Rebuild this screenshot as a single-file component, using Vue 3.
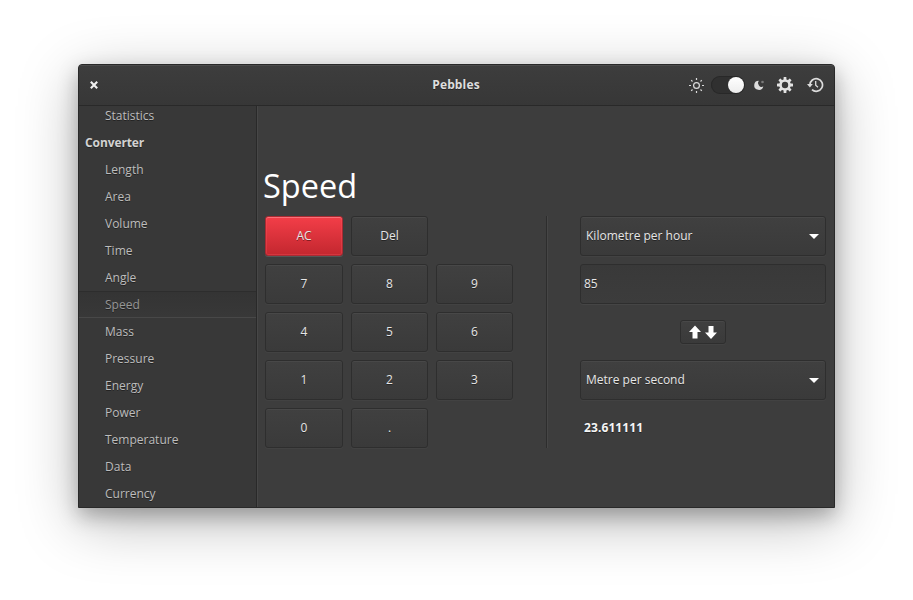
<script setup>
import { ref } from 'vue'

const units = ['Length', 'Area', 'Volume', 'Time', 'Angle', 'Speed', 'Mass', 'Pressure', 'Energy', 'Power', 'Temperature', 'Data', 'Currency']
const selected = ref('Speed')
const keys = ['7', '8', '9', '4', '5', '6', '1', '2', '3', '0', '.']
</script>

<template>
  <div class="desktop">
    <div class="window">
      <header class="headerbar">
        <div class="side">
          <svg class="close" viewBox="0 0 8 8" width="8" height="8"><path d="M.8 .8L7.200 7.200M7.200 .8L.8 7.200" stroke="#f0f0f0" stroke-width="2.100" /></svg>
        </div>
        <h1 class="title">Pebbles</h1>
        <div class="side tools">
          <svg class="sun" width="16" height="16" viewBox="0 0 16 16" fill="none" stroke="#dcdcdc">
            <circle cx="8.500" cy="8.500" r="2.900" stroke-width="1.200" />
            <path d="M8.500 1V3M8.500 14v2M1 8.500H3M14 8.500h2M3.200 3.200l1.300 1.300M12.500 12.500l1.300 1.300M13.800 3.200l-1.300 1.300M4.500 12.500l-1.300 1.300" stroke-width="1.200" />
          </svg>
          <div class="switch"><span class="knob"></span></div>
          <svg class="moon" width="12" height="12" viewBox="0 0 12 12" fill="#dcdcdc">
            <path d="M5.800 1.700A4.600 4.600 0 1 0 10.300 7.200A2.800 2.800 0 0 1 5.800 6.200A3.600 3.600 0 0 1 5.800 1.700Z" />
            <circle cx="9.500" cy="3" r="1.300" opacity=".4" />
          </svg>
          <svg class="gear" width="16" height="16" viewBox="0 0 16 16">
            <g fill="#e2e2e2">
              <rect v-for="a in [0, 45, 90, 135]" :key="a" x="6.600" y="0" width="2.800" height="16" rx=".5" :transform="`rotate(${a} 8 8)`" />
              <circle cx="8" cy="8" r="5.800" />
            </g>
            <circle cx="8" cy="8" r="3.200" fill="#3a3a3a" />
          </svg>
          <svg class="history" width="17" height="16" viewBox="0 0 17 16" fill="none" stroke="#dcdcdc">
            <path d="M2.900 8A6.300 6.300 0 1 1 5 12.700" stroke-width="1.700" />
            <path d="M0 7H5.800L2.900 10.500Z" fill="#dcdcdc" stroke="none" />
            <path d="M8.700 4V8.300L11 10.300" stroke-width="1.300" />
          </svg>
        </div>
      </header>
      <div class="body">
        <nav class="sidebar">
          <div class="item">Statistics</div>
          <div class="item category">Converter</div>
          <div v-for="u in units" :key="u" class="item" :class="{ selected: u === selected }" @click="selected = u">{{ u }}</div>
        </nav>
        <main class="content">
          <h2 class="heading">Speed</h2>
          <div class="panels">
            <div class="keypad">
              <button class="btn destructive">AC</button>
              <button class="btn">Del</button>
              <span></span>
              <button v-for="k in keys" :key="k" class="btn">{{ k }}</button>
            </div>
            <div class="separator"></div>
            <div class="conversion">
              <button class="btn combo">Kilometre per hour
                <svg width="10" height="5" viewBox="0 0 10 5"><path d="M0 0H10L5 5Z" fill="#fff" /></svg>
              </button>
              <div class="entry">85</div>
              <div class="swap-row">
                <button class="btn swap">
                  <svg width="28" height="14" viewBox="0 0 28 14" fill="#fff">
                    <path d="M6 .5L12 7H8.500V13.500H3.500V7H0Z" />
                    <path d="M22 14L16 7.500H19.500V1H24.500V7.500H28Z" />
                  </svg>
                </button>
              </div>
              <button class="btn combo">Metre per second
                <svg width="10" height="5" viewBox="0 0 10 5"><path d="M0 0H10L5 5Z" fill="#fff" /></svg>
              </button>
              <div class="result">23.611111</div>
            </div>
          </div>
        </main>
      </div>
    </div>
  </div>
</template>

<style>
body {
  background: #fff;
}
</style>

<style scoped>
* {
  box-sizing: border-box;
}
.desktop {
  height: 600px;
  padding: 64px 78px 92px;
  overflow: hidden;
  font: 12px/18px "Open Sans", "Noto Sans", sans-serif;
  color: #e6e6e6;
  text-shadow: 0 1px rgba(0, 0, 0, 0.4);
}
.window {
  display: flex;
  flex-direction: column;
  width: 757px;
  height: 444px;
  border: 1px solid #292929;
  border-radius: 4px 4px 0 0;
  background: #3d3d3d;
  overflow: hidden;
  box-shadow: 0 14px 60px rgba(0, 0, 0, 0.28), 0 8px 20px rgba(0, 0, 0, 0.26);
}
.headerbar {
  flex: none;
  display: flex;
  align-items: center;
  height: 41px;
  padding: 0 10px 0 11px;
  border-bottom: 1px solid #292929;
  background: linear-gradient(#3d3d3d, #373737);
  box-shadow: inset 0 1px #4b4b4b;
}
.side {
  flex: 1;
  display: flex;
  align-items: center;
}
.tools {
  justify-content: flex-end;
}
.title {
  margin: 0 2px 0 0;
  font-size: 12px;
  font-weight: 700;
  letter-spacing: 0.15px;
  color: #dedede;
}
.sun {
  margin-right: 7px;
}
.switch {
  display: flex;
  justify-content: flex-end;
  width: 34px;
  height: 18px;
  margin-right: 8px;
  padding: 1px;
  border-radius: 9px;
  background: #303030;
  box-shadow: inset 0 0 0 1px #282828;
}
.knob {
  width: 16px;
  height: 16px;
  border-radius: 50%;
  background: linear-gradient(#fff, #ededed);
}
.moon {
  margin-right: 12px;
}
.gear {
  margin-right: 14px;
}
.body {
  flex: 1;
  min-height: 0;
  display: flex;
}
.sidebar {
  flex: none;
  display: flex;
  flex-direction: column;
  justify-content: flex-end;
  width: 178px;
  overflow: hidden;
  border-right: 1px solid #292929;
  background: #383838;
  color: #bdbdbd;
}
.item {
  flex: none;
  height: 27px;
  padding-left: 26px;
  line-height: 27px;
}
.category {
  padding-left: 6px;
  font-weight: 700;
  letter-spacing: -0.1px;
  color: #d2d2d2;
}
.selected {
  line-height: 25px;
  border-top: 1px solid #2d2d2d;
  border-bottom: 1px solid #484848;
  background: linear-gradient(#343434, #383838);
  color: #969696;
}
.content {
  flex: 1;
  padding: 57px 8px 0 7px;
  border-left: 1px solid #474747;
}
.heading {
  height: 53px;
  margin: 0 0 0 -2px;
  font-size: 32.5px;
  line-height: 46px;
  font-weight: 400;
  color: #fff;
  text-shadow: none;
}
.panels {
  display: flex;
}
.keypad {
  display: grid;
  grid-template-columns: 78px 77px 77px;
  grid-auto-rows: 40px;
  gap: 8px;
}
.btn {
  display: flex;
  align-items: center;
  justify-content: center;
  padding: 0;
  border: 1px solid #2e2e2e;
  border-radius: 3px;
  background: linear-gradient(#404040, #3a3a3a);
  box-shadow: inset 0 1px #484848, 0 1px #424242;
  font: inherit;
  color: inherit;
  text-shadow: inherit;
}
.destructive {
  border-color: #a82a32;
  background: linear-gradient(#f33e48, #c3272f);
  box-shadow: inset 0 1px #f97078, inset 0 0 0 1px rgba(255, 90, 100, 0.3), 0 1px #555;
}
.separator {
  width: 2px;
  margin: 0 32px 0 33px;
  border-left: 1px solid #2d2d2d;
  border-right: 1px solid #464646;
}
.conversion {
  flex: 1;
  display: grid;
  grid-auto-rows: 40px;
  gap: 8px;
}
.combo {
  justify-content: space-between;
  padding: 0 6px 0 5px;
}
.combo svg {
  margin-top: 1px;
}
.entry {
  padding-left: 3px;
  border: 1px solid #2e2e2e;
  border-radius: 3px;
  line-height: 38px;
  background: linear-gradient(#393939, #3c3c3c);
  box-shadow: 0 1px #454545;
}
.swap-row {
  display: flex;
  align-items: center;
  justify-content: center;
}
.swap {
  width: 46px;
  height: 24px;
}
.result {
  padding-left: 4px;
  line-height: 40px;
  font-weight: 700;
  letter-spacing: 0.1px;
  color: #f6f6f6;
}
</style>
